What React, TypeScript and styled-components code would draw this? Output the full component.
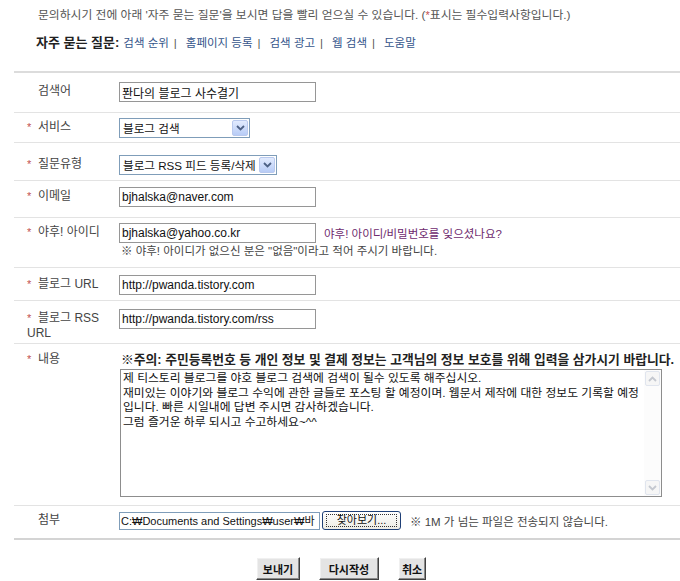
import styled, { createGlobalStyle } from "styled-components";

const GlobalStyle = createGlobalStyle`
  html, body {
    margin: 0;
    padding: 0;
    background: #fff;
    overflow: hidden;
  }
  body {
    font-family: "Liberation Sans", "Noto Sans CJK KR", sans-serif;
    font-size: 12px;
    color: #333;
  }
`;

function Chevron({ up, color }: { up?: boolean; color: string }) {
  return (
    <svg width="9" height="6" viewBox="0 0 9 6">
      <path
        d={up ? "M1 5 L4.5 1.5 L8 5" : "M1 1 L4.5 4.5 L8 1"}
        stroke={color}
        strokeWidth="1.8"
        fill="none"
      />
    </svg>
  );
}

function Select({ w, value }: { w: number; value: string }) {
  return (
    <SelectBox $w={w}>
      <SelectValue>{value}</SelectValue>
      <DropButton>
        <Chevron color="#4d6185" />
      </DropButton>
    </SelectBox>
  );
}

const links = ["검색 순위", "홈페이지 등록", "검색 광고", "웹 검색", "도움말"];

function App() {
  return (
    <Page>
      <GlobalStyle />
      <Intro>
        문의하시기 전에 아래 '자주 묻는 질문'을 보시면 답을 빨리 얻으실 수 있습니다. (
        <Star>*</Star>표시는 필수입력사항입니다.)
      </Intro>
      <Faq>
        <FaqTitle>자주 묻는 질문:</FaqTitle>
        {links.map((l, i) => (
          <span key={l}>
            <FaqLink>{l}</FaqLink>
            {i < links.length - 1 && <Pipe>|</Pipe>}
          </span>
        ))}
      </Faq>

      <Form>
        <Row $pt={9} $pb={10}>
          <Label>검색어</Label>
          <Value>
            <TextInput $w={197} defaultValue="퐌다의 블로그 사수결기" readOnly />
          </Value>
        </Row>
        <Row $pt={5} $pb={4}>
          <Label $required>서비스</Label>
          <Value>
            <Select w={131} value="블로그 검색" />
          </Value>
        </Row>
        <Row $pt={12} $pb={5}>
          <Label $required>질문유형</Label>
          <Value>
            <Select w={158} value="블로그 RSS 피드 등록/삭제" />
          </Value>
        </Row>
        <Row $pt={6} $pb={10}>
          <Label $required>이메일</Label>
          <Value>
            <TextInput $w={197} defaultValue="bjhalska@naver.com" readOnly />
          </Value>
        </Row>
        <Row $pt={5} $pb={9}>
          <Label $required>야후! 아이디</Label>
          <Value>
            <Inline>
              <TextInput $w={197} defaultValue="bjhalska@yahoo.co.kr" readOnly />
              <PurpleLink>야후! 아이디/비밀번호를 잊으셨나요?</PurpleLink>
            </Inline>
            <Note>※ 야후! 아이디가 없으신 분은 "없음"이라고 적어 주시기 바랍니다.</Note>
          </Value>
        </Row>
        <Row $pt={7} $pb={5}>
          <Label $required>블로그 URL</Label>
          <Value>
            <TextInput $w={197} defaultValue="http://pwanda.tistory.com" readOnly />
          </Value>
        </Row>
        <Row $pt={8} $pb={2}>
          <Label $required>블로그 RSS URL</Label>
          <Value>
            <TextInput $w={197} defaultValue="http://pwanda.tistory.com/rss" readOnly />
          </Value>
        </Row>
        <Row $pt={6} $pb={8}>
          <Label $required>내용</Label>
          <Value>
            <Warning>
              ※주의: 주민등록번호 등 개인 정보 및 결제 정보는 고객님의 정보 보호를 위해 입력을 삼가시기 바랍니다.
            </Warning>
            <TextArea>
              <TextBody>
                <div>제 티스토리 블로그를 야호 블로그 검색에 검색이 될수 있도록 해주십시오.</div>
                <div>재미있는 이야기와 블로그 수익에 관한 글들로 포스팅 할 예정이며. 웹문서 제작에 대한 정보도 기록할 예정</div>
                <div>입니다. 빠른 시일내에 답변 주시면 감사하겠습니다.</div>
                <div>그럼 즐거운 하루 되시고 수고하세요~^^</div>
              </TextBody>
              <ScrollTrack>
                <ScrollButton>
                  <Chevron up color="#c4c8d0" />
                </ScrollButton>
                <ScrollButton>
                  <Chevron color="#c4c8d0" />
                </ScrollButton>
              </ScrollTrack>
            </TextArea>
          </Value>
        </Row>
        <Row $pt={5} $pb={8} $last>
          <Label>첨부</Label>
          <Value>
            <Inline>
              <FileField>C:₩Documents and Settings₩user₩바</FileField>
              <BrowseButton>
                <FocusRing>찾아보기...</FocusRing>
              </BrowseButton>
              <FileNote>※ 1M 가 넘는 파일은 전송되지 않습니다.</FileNote>
            </Inline>
          </Value>
        </Row>
      </Form>

      <Actions>
        <ActionButton $w={44}>보내기</ActionButton>
        <ActionButton $w={60}>다시작성</ActionButton>
        <ActionButton $w={28}>취소</ActionButton>
      </Actions>
    </Page>
  );
}
export default App;

const Page = styled.div`
  width: 680px;
  height: 581px;
  overflow: hidden;
`;

const Intro = styled.div`
  padding: 9px 0 0 38px;
  font-size: 11.8px;
  line-height: 13px;
  color: #555;
  white-space: nowrap;
`;

const Star = styled.span`
  color: #c24f4f;
  font-size: 11px;
`;

const Faq = styled.div`
  margin-top: 14px;
  padding-left: 36px;
  line-height: 14px;
  font-size: 11.5px;
  white-space: nowrap;
`;

const FaqTitle = styled.b`
  font-size: 13px;
  color: #222;
  margin-right: 4px;
`;

const FaqLink = styled.a`
  color: #34558b;
  cursor: pointer;
`;

const Pipe = styled.span`
  color: #555;
  margin: 0 9px 0 5px;
`;

const Form = styled.div`
  margin: 21px 0 0 14px;
  width: 700px;
  border-top: 2px solid #dcdcdc;
`;

const Row = styled.div<{ $pt: number; $pb: number; $last?: boolean }>`
  display: grid;
  grid-template-columns: 105px 1fr;
  padding: ${(p) => p.$pt}px 0 ${(p) => p.$pb}px;
  border-bottom: ${(p) => (p.$last ? "2px solid #d4d4d4" : "1px solid #e3e3e3")};
`;

const Label = styled.div<{ $required?: boolean }>`
  padding: 2px 0 0 13px;
  width: 80px;
  line-height: 15px;
  font-size: 12px;
  color: #444;

  &::before {
    content: "${(p) => (p.$required ? "*" : "")}";
    display: inline-block;
    width: 11px;
    color: #c24f4f;
    font-size: 11px;
  }
`;

const Value = styled.div`
  display: flex;
  flex-direction: column;
  align-items: flex-start;
`;

const Inline = styled.div`
  display: flex;
  align-items: center;
  white-space: nowrap;
`;

const TextInput = styled.input<{ $w: number }>`
  width: ${(p) => p.$w}px;
  height: 20px;
  box-sizing: border-box;
  border: 1px solid #969696;
  padding: 0 2px;
  margin: 0;
  font-family: "Liberation Sans", "Noto Sans CJK KR", sans-serif;
  font-size: 12px;
  color: #111;
  outline: none;
`;

const SelectBox = styled.div<{ $w: number }>`
  display: flex;
  align-items: center;
  width: ${(p) => p.$w}px;
  height: 20px;
  box-sizing: border-box;
  border: 1px solid #7f9db9;
  background: #fff;
  padding-left: 3px;
`;

const SelectValue = styled.span`
  flex: 1;
  font-size: 11.6px;
  color: #111;
  white-space: nowrap;
  overflow: hidden;
`;

const DropButton = styled.span`
  display: flex;
  align-items: center;
  justify-content: center;
  width: 16px;
  height: 16px;
  margin-right: 1px;
  box-sizing: border-box;
  border: 1px solid #b9c9ee;
  border-radius: 2px;
  background: linear-gradient(#e2ebfe, #b8ccf6);
`;

const PurpleLink = styled.a`
  margin-left: 8px;
  font-size: 11.5px;
  color: #6e2a6e;
  cursor: pointer;
`;

const Note = styled.div`
  margin-top: 1px;
  padding-left: 2px;
  font-size: 11.5px;
  line-height: 14px;
  color: #444;
  white-space: nowrap;
`;

const Warning = styled.div`
  margin-top: 3px;
  padding-left: 2px;
  font-size: 12.8px;
  font-weight: bold;
  line-height: 14px;
  color: #222;
  white-space: nowrap;
`;

const TextArea = styled.div`
  display: flex;
  margin: 2px 0 0 1px;
  width: 542px;
  height: 128px;
  box-sizing: border-box;
  border: 1px solid #8d8d8d;
  background: #fff;
`;

const TextBody = styled.div`
  flex: 1;
  padding: 1px 2px;
  font-size: 11.8px;
  line-height: 14.5px;
  color: #111;
  white-space: nowrap;
  overflow: hidden;
`;

const ScrollTrack = styled.div`
  display: flex;
  flex-direction: column;
  justify-content: space-between;
  width: 17px;
  padding: 1px;
  box-sizing: border-box;
  background: #fcfcfc;
`;

const ScrollButton = styled.div`
  display: flex;
  align-items: center;
  justify-content: center;
  height: 15px;
  box-sizing: border-box;
  border: 1px solid #e0e5ee;
  border-radius: 2px;
  background: #f6f6f6;
`;

const FileField = styled.div`
  width: 201px;
  height: 18px;
  box-sizing: border-box;
  border: 1px solid #7f9db9;
  padding: 0 1px;
  font-size: 11px;
  line-height: 16px;
  color: #111;
  white-space: nowrap;
  overflow: hidden;
`;

const BrowseButton = styled.div`
  display: flex;
  align-items: stretch;
  margin-left: 2px;
  padding: 2px 3px;
  width: 79px;
  height: 19px;
  box-sizing: border-box;
  border: 1px solid #1e3f76;
  border-radius: 3px;
  background: linear-gradient(#ffffff, #ecebe4);
`;

const FocusRing = styled.span`
  flex: 1;
  border: 1px dotted #333;
  font-size: 11px;
  line-height: 11px;
  text-align: center;
  color: #111;
`;

const FileNote = styled.span`
  margin-left: 9px;
  font-size: 11.5px;
  color: #444;
`;

const Actions = styled.div`
  display: flex;
  justify-content: center;
  gap: 19px;
  margin: 17px 0 0 8px;
  width: 666px;
`;

const ActionButton = styled.button<{ $w: number }>`
  width: ${(p) => p.$w}px;
  height: 23px;
  padding: 0;
  box-sizing: border-box;
  border: 1px solid;
  border-color: #ffffff #404040 #404040 #ffffff;
  box-shadow: inset -1px -1px #8a8a8a, inset 1px 1px #f0f0f0;
  background: #e4e4e4;
  font-family: "Liberation Sans", "Noto Sans CJK KR", sans-serif;
  font-size: 11px;
  font-weight: bold;
  color: #111;
  white-space: nowrap;
`;
